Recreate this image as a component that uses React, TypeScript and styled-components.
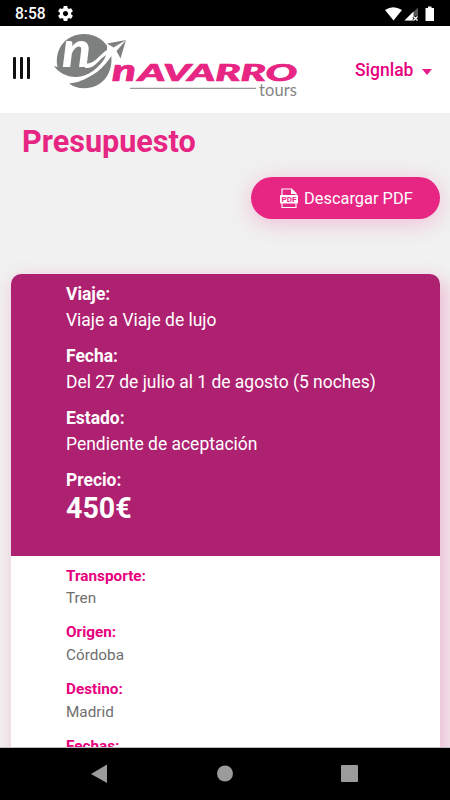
import React from "react";
import styled, { createGlobalStyle } from "styled-components";

const Global = createGlobalStyle`
  * { box-sizing: border-box; }
  body { margin: 0; font-family: Roboto, sans-serif; background: #f1f1f1; }
`;

const Screen = styled.div`
  width: 450px;
  height: 800px;
  display: flex;
  flex-direction: column;
  overflow: hidden;
`;

const StatusBar = styled.div`
  height: 26px;
  flex: none;
  background: #000;
  color: #fff;
  display: flex;
  align-items: center;
  padding: 1px 16px 0 15px;
`;

const Clock = styled.span`
  font-size: 15.6px;
  font-weight: 500;
  width: 43px;
  padding-top: 1px;
`;

const StatusIcons = styled.svg`
  margin-left: auto;
`;

const Header = styled.header`
  height: 87px;
  flex: none;
  background: #fff;
  display: flex;
  align-items: flex-start;
  padding-left: 13px;
`;

const MenuButton = styled.button`
  margin: 31px 0 0;
  padding: 0;
  border: 0;
  background: none;
  width: 17px;
  height: 22px;
  display: flex;
  justify-content: space-between;
`;

const MenuBar = styled.span`
  width: 2.6px;
  height: 22px;
  border-radius: 1px;
  background: #111;
`;

const Logo = styled.svg`
  margin-left: 20px;
`;

const Account = styled.div`
  margin: 34px 0 0 55px;
  color: #e6007e;
  font-size: 17.5px;
  line-height: 21px;
  font-weight: 500;
  display: flex;
  align-items: center;
  gap: 9px;
`;

const Caret = styled.span`
  border: 5px solid transparent;
  border-top: 6px solid #e6188a;
  border-bottom: 0;
  margin-top: 2px;
`;

const Content = styled.main`
  flex: 1;
  min-height: 0;
  background: #f1f1f1;
  padding: 0 10px 0 11px;
  overflow: hidden;
  display: flex;
  flex-direction: column;
  border-bottom: 1px solid #bbb;
`;

const Title = styled.h1`
  margin: 11px 0 0 11px;
  font-size: 30.6px;
  line-height: 36px;
  font-weight: 700;
  color: #e72583;
`;

const DownloadButton = styled.button`
  align-self: flex-end;
  flex: none;
  margin-top: 16.5px;
  width: 189px;
  height: 42px;
  border: 0;
  border-radius: 21px;
  background: #e72583;
  color: #fff;
  font: 400 16.4px Roboto, sans-serif;
  display: flex;
  align-items: center;
  padding: 1px 0 0 29px;
  gap: 6px;
  box-shadow: 0 4px 22px rgba(231, 37, 131, 0.26);
`;

const Card = styled.section`
  flex: none;
  margin-top: 55.5px;
  height: 520px;
  border-radius: 10px;
  background: #fff;
  overflow: hidden;
  box-shadow: 0 4px 22px rgba(231, 37, 131, 0.12),
    8px 8px 18px rgba(231, 37, 131, 0.18);
`;

const Summary = styled.dl`
  margin: 0;
  height: 282px;
  background: #ae2070;
  color: #fff;
  padding: 7px 0 0 55px;
  font-size: 17.47px;
  line-height: 26px;
`;

const Details = styled.dl`
  margin: 0;
  padding: 8.5px 0 0 55px;
  font-size: 15.3px;
  line-height: 22.5px;
  color: #6f6f6f;
`;

const Label = styled.dt<{ $accent?: boolean }>`
  font-weight: 700;
  color: ${(p) => (p.$accent ? "#e6007e" : "inherit")};
`;

const Value = styled.dd<{ $gap: number }>`
  margin: 0 0 ${(p) => p.$gap}px;
`;

const Price = styled.dd`
  margin: 0;
  font-size: 28.6px;
  line-height: 31px;
  font-weight: 700;
`;

const NavBar = styled.nav`
  height: 52px;
  flex: none;
  background: #000;
  display: flex;
  justify-content: center;
  align-items: center;
`;

const summary = [
  ["Viaje:", "Viaje a Viaje de lujo"],
  ["Fecha:", "Del 27 de julio al 1 de agosto (5 noches)"],
  ["Estado:", "Pendiente de aceptación"],
];

const details = [
  ["Transporte:", "Tren"],
  ["Origen:", "Córdoba"],
  ["Destino:", "Madrid"],
  ["Fechas:", ""],
];

const GearIcon = () => (
  <svg width="15" height="15" viewBox="2 2 20 20" fill="#fff">
    <path d="M19.43 12.98c.04-.32.07-.64.07-.98s-.03-.66-.07-.98l2.11-1.65c.19-.15.24-.42.12-.64l-2-3.46c-.12-.22-.39-.3-.61-.22l-2.49 1c-.52-.4-1.08-.73-1.69-.98l-.38-2.65C14.46 2.18 14.25 2 14 2h-4c-.25 0-.46.18-.49.42l-.38 2.65c-.61.25-1.17.59-1.69.98l-2.49-1c-.23-.09-.49 0-.61.22l-2 3.46c-.13.22-.07.49.12.64l2.11 1.65c-.04.32-.07.65-.07.98s.03.66.07.98l-2.11 1.65c-.19.15-.24.42-.12.64l2 3.46c.12.22.39.3.61.22l2.49-1c.52.4 1.08.73 1.69.98l.38 2.65c.03.24.24.42.49.42h4c.25 0 .46-.18.49-.42l.38-2.65c.61-.25 1.17-.59 1.69-.98l2.49 1c.23.09.49 0 .61-.22l2-3.46c.12-.22.07-.49-.12-.64l-2.11-1.65zM12 15.5c-1.93 0-3.5-1.57-3.5-3.5s1.57-3.5 3.5-3.5 3.5 1.57 3.5 3.5-1.57 3.5-3.5 3.5z" />
  </svg>
);

const BrandLogo = () => (
  <Logo width="250" height="80" viewBox="50 26 250 80" fontFamily="Lato, sans-serif">
    <path d="M54 66L57.500 67C54 49 66 34 84 34C96 34 106 41 110 51L107 56C99 67 89 77 76 77C66 77 58 72 54 66Z" fill="#7d807f" />
    <path d="M69 83.500C87 82 99 70 106 60L111 54C114 72 103 88.300 84 88.300C78 88.300 73 86.500 69 83.500Z" fill="#7d807f" />
    <path d="M85 63C93 66 99 55 107 50L107 44L112 48L125 41L117 51L119 56L112 55C104 67 94 78 76 81C94 75 103 64 106 55C98 60 95 69 85 68Z" fill="#fff" />
    <path d="M107 43.500L126 40L113.500 47.500Z" fill="#7d807f" />
    <path d="M126 40L120.500 58.500L116.500 51Z" fill="#7d807f" />
    <text x="62" y="67" fontWeight="900" fontStyle="italic" fontSize="49" textLength="29" lengthAdjust="spacingAndGlyphs" fill="#fff">n</text>
    <g fontWeight="900" fontStyle="italic" fill="#e72583" stroke="#e72583" strokeWidth=".7">
      <text x="112" y="81" fontSize="30" textLength="24" lengthAdjust="spacingAndGlyphs">n</text>
      <text x="138" y="81" fontSize="22.500" textLength="159" lengthAdjust="spacingAndGlyphs">AVARRO</text>
    </g>
    <path d="M130 88.300H256" stroke="#999" strokeWidth="1.2" />
    <text x="259" y="96" fontSize="16.500" textLength="38" fill="#858585">tours</text>
  </Logo>
);

const PdfIcon = () => (
  <svg width="18" height="21" viewBox="0 0 18 21">
    <path d="M2 7V1h9.500L16 5.500V7M2 15v4.500h14V15" fill="none" stroke="#fff" strokeWidth="1.1" />
    <path d="M11 .5L16.500 6H11Z" fill="#fff" />
    <rect x="0" y="7" width="18" height="8.500" rx="1" fill="#fff" />
    <text x="1.500" y="14.100" fontSize="8" fontWeight="700" textLength="15" lengthAdjust="spacingAndGlyphs" fontFamily="Roboto, sans-serif" fill="#e72583">PDF</text>
  </svg>
);

export default function App() {
  return (
    <Screen>
      <Global />
      <StatusBar>
        <Clock>8:58</Clock>
        <GearIcon />
        <StatusIcons width="50" height="16" viewBox="384 5 50 16">
          <path d="M385 9Q393 3.500 402 9L393.500 19.500Z" fill="#fff" />
          <path d="M404.500 19.500L418 6.500V19.500Z" fill="#555" />
          <path d="M404.500 19.500L413.500 10.500V19.500Z" fill="#fff" />
          <path d="M413.500 15.500l4 4m0-4l-4 4" stroke="#000" strokeWidth="3" />
          <path d="M413.500 15.500l4 4m0-4l-4 4" stroke="#fff" strokeWidth="1.300" />
          <path d="M425.500 7H428V5.500H431.500V7H434V20H425.500Z" fill="#fff" />
        </StatusIcons>
      </StatusBar>
      <Header>
        <MenuButton aria-label="Menú">
          <MenuBar />
          <MenuBar />
          <MenuBar />
        </MenuButton>
        <BrandLogo />
        <Account>
          Signlab
          <Caret />
        </Account>
      </Header>
      <Content>
        <Title>Presupuesto</Title>
        <DownloadButton>
          <PdfIcon />
          Descargar PDF
        </DownloadButton>
        <Card>
          <Summary>
            {summary.map(([label, value]) => (
              <React.Fragment key={label}>
                <Label>{label}</Label>
                <Value $gap={10}>{value}</Value>
              </React.Fragment>
            ))}
            <Label>Precio:</Label>
            <Price>450€</Price>
          </Summary>
          <Details>
            {details.map(([label, value]) => (
              <React.Fragment key={label}>
                <Label $accent>{label}</Label>
                <Value $gap={11.8}>{value}</Value>
              </React.Fragment>
            ))}
          </Details>
        </Card>
      </Content>
      <NavBar>
        <svg width="270" height="20" viewBox="90 764 270 20" fill="#9b9b9b">
          <path d="M91 774L107 764.500V783Z" />
          <circle cx="225" cy="773.500" r="8" />
          <rect x="341" y="765" width="17" height="17" rx="1" />
        </svg>
      </NavBar>
    </Screen>
  );
}
